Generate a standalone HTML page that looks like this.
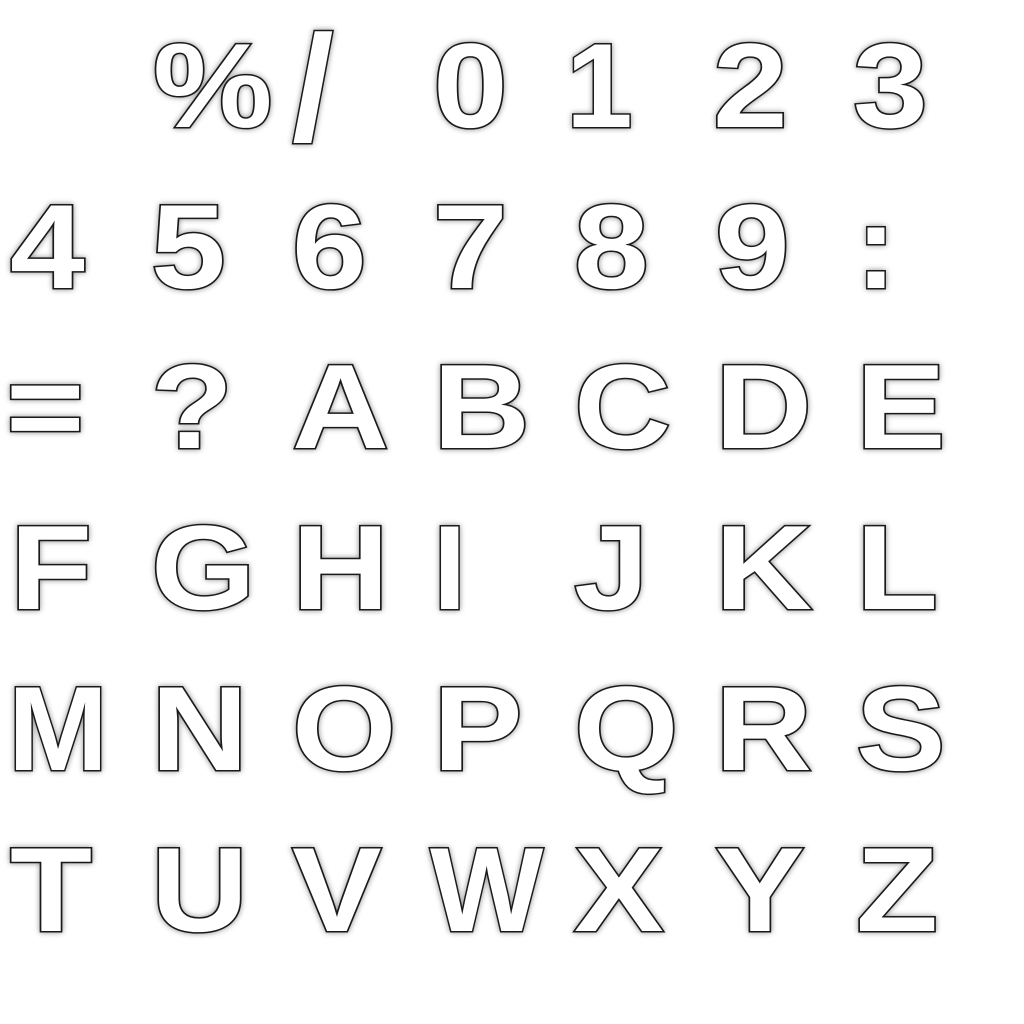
<!DOCTYPE html>
<html><head><meta charset="utf-8"><style>
html,body{margin:0;padding:0;background:#fff;width:1024px;height:1024px;overflow:hidden}
svg{display:block;filter:drop-shadow(0 0 3px rgba(0,0,0,.45))}
text{font-family:"Liberation Sans",sans-serif;font-weight:bold;font-size:120px;fill:#fff;stroke:#1a1a1a;stroke-width:3px;paint-order:stroke;transform-box:fill-box;transform-origin:0 0;transform:scaleX(1.12)}
text.n{transform:none}
</style></head><body>
<svg width="1024" height="1024" viewBox="0 0 1024 1024">
<text x="153" y="127">%</text>
<text class="n" x="292" y="140" style="font-size:150px">/</text>
<text x="433" y="127">0</text>
<text class="n" x="566" y="127">1</text>
<text x="713" y="127">2</text>
<text x="853" y="127">3</text>

<text x="10" y="288">4</text>
<text x="151" y="288">5</text>
<text x="292" y="288">6</text>
<text x="433" y="288">7</text>
<text x="574" y="288">8</text>
<text x="715" y="288">9</text>
<text class="n" x="856" y="288">:</text>

<text x="6" y="448">=</text>
<text x="151" y="448">?</text>
<text x="292" y="448">A</text>
<text x="433" y="448">B</text>
<text x="574" y="448">C</text>
<text x="715" y="448">D</text>
<text x="856" y="448">E</text>

<text x="10" y="609">F</text>
<text x="151" y="609">G</text>
<text x="292" y="609">H</text>
<text class="n" x="433" y="609">I</text>
<text x="574" y="609">J</text>
<text x="715" y="609">K</text>
<text x="856" y="609">L</text>

<text class="n" x="8" y="770">M</text>
<text x="151" y="770">N</text>
<text x="292" y="770">O</text>
<text x="433" y="770">P</text>
<text x="574" y="770">Q</text>
<text x="715" y="770">R</text>
<text x="856" y="770">S</text>

<text x="10" y="931">T</text>
<text x="151" y="931">U</text>
<text x="292" y="931">V</text>
<text class="n" x="430" y="931">W</text>
<text x="574" y="931">X</text>
<text x="715" y="931">Y</text>
<text x="856" y="931">Z</text>
</svg>
</body></html>
